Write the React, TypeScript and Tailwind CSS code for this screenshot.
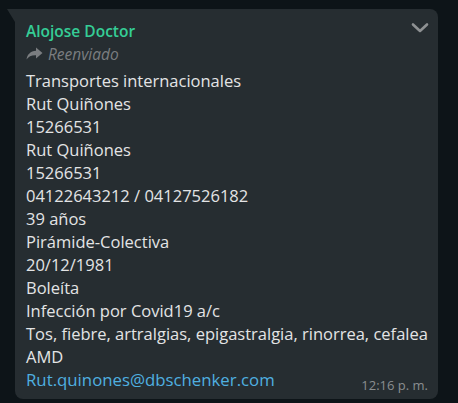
import React from "react"

const lines = [
  "Transportes internacionales",
  "Rut Quiñones",
  "15266531",
  "Rut Quiñones",
  "15266531",
  "04122643212 / 04127526182",
  "39 años",
  "Pirámide-Colectiva",
  "20/12/1981",
  "Boleíta",
  "Infección por Covid19 a/c",
  "Tos, fiebre, artralgias, epigastralgia, rinorrea, cefalea",
  "AMD",
]

const ForwardIcon = () => (
  <svg width="17" height="13" viewBox="0 0 17 13" className="mr-[5px] shrink-0">
    <path d="M10 0.5 L16.5 6 L10 11.5 V8.2 C5.5 8 2.5 9.5 0.5 12.5 C1.2 7.5 4.5 4.2 10 3.8 Z" fill="#7a7d80" />
  </svg>
)

const Chevron = () => (
  <svg width="18" height="12" viewBox="0 0 18 12">
    <path d="M2 2.5 L9 9 L16 2.5" stroke="#8e9193" strokeWidth="2.6" fill="none" strokeLinecap="round" strokeLinejoin="round" />
  </svg>
)

export default function App() {
  return (
    <div className="w-[458px] h-[403px] bg-[#0d1418] overflow-hidden pt-[9px] pl-[7px]" style={{ fontFamily: '"Open Sans", "Noto Sans", sans-serif' }}>
      <div className="flex">
        <svg width="8" height="13" viewBox="0 0 8 13" className="shrink-0">
          <path d="M0 0 H8 V13 Z" fill="#262d31" />
        </svg>
        <div className="relative w-[423px] h-[390px] bg-[#262d31] rounded-r-[8px] rounded-bl-[8px] pt-[11px] pl-[11px] pr-[10px]">
          <div className="absolute right-[9px] top-[13px]">
            <Chevron />
          </div>
          <div className="text-[#35cd96] font-semibold text-[15.5px] leading-[22px]">Alojose Doctor</div>
          <div className="flex items-center text-[#7a7d80] italic text-[15.5px] leading-[22px] h-[23px]">
            <ForwardIcon />
            Reenviado
          </div>
          <div className="mt-[4px] text-[#e3e4e5] text-[16.5px] leading-[23px]">
            {lines.map((l, i) => (
              <div key={i} className="whitespace-nowrap">{l}</div>
            ))}
            <div className="flex items-end justify-between">
              <span className="text-[#4fb0e0] text-[16.8px]">Rut.quinones@dbschenker.com</span>
              <span className="text-[#8a8e90] text-[13px] leading-[16px] mb-[-2px]">12:16 p. m.</span>
            </div>
          </div>
        </div>
      </div>
    </div>
  )
}
